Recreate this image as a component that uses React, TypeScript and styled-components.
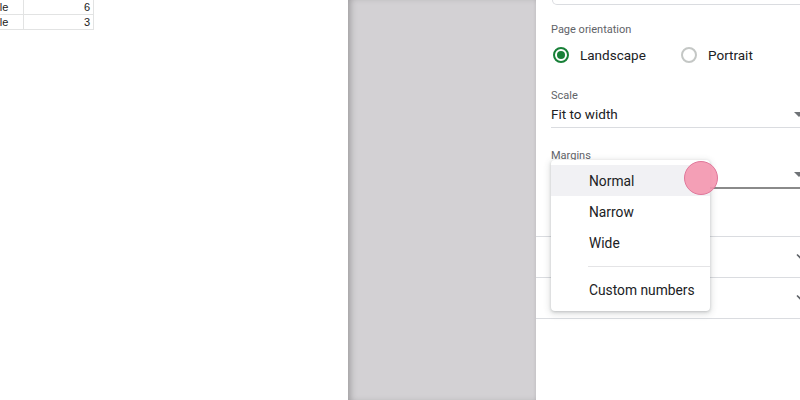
import React from "react";
import styled, { createGlobalStyle } from "styled-components";

const Global = createGlobalStyle`
  html, body { margin: 0; padding: 0; background: #fff; }
  body { font-family: Roboto, "Liberation Sans", Arial, sans-serif; color: #202124; }
  * { box-sizing: border-box; }
`;

const Page = styled.div`
  display: flex;
  width: 800px;
  height: 400px;
  overflow: hidden;
`;

const Sheet = styled.div`
  width: 348px;
  flex: none;
  background: #fff;
  overflow: hidden;
`;

const Table = styled.div`
  display: grid;
  grid-template-columns: 60px 70px;
  margin-left: -36px;
  width: 130px;
  font-family: "Liberation Sans", Arial, sans-serif;
  font-size: 11px;
  color: #222;
`;

const Cell = styled.div<{ $num?: boolean }>`
  height: 15px;
  line-height: 14px;
  padding: 0 3px;
  border-bottom: 1px solid #e2e3e3;
  border-right: 1px solid #e2e3e3;
  white-space: nowrap;
  overflow: hidden;
  text-align: ${(p) => (p.$num ? "right" : "left")};
  ${(p) => (p.$num ? "" : "padding-left: 7px;")}
`;

const Gutter = styled.div`
  width: 188px;
  flex: none;
  background: #d3d1d4;
  box-shadow: inset 5px 0 7px -3px rgba(0, 0, 0, 0.28), inset -3px 0 3px -2px rgba(0, 0, 0, 0.08);
`;

const Panel = styled.div`
  width: 264px;
  flex: none;
  position: relative;
  overflow: hidden;
  background: #fff;
`;

const Inner = styled.div`
  width: 280px;
  display: flex;
  flex-direction: column;
`;

const TopField = styled.div`
  margin-left: 16px;
  height: 5px;
  border: 1px solid #dadce0;
  border-top: none;
  border-bottom-left-radius: 5px;
`;

const Section = styled.div`
  padding-left: 15px;
  display: flex;
  flex-direction: column;
`;

const Label = styled.div<{ $mt: number }>`
  margin-top: ${(p) => p.$mt}px;
  font-size: 11px;
  line-height: 14px;
  color: #5f6368;
`;

const RadioRow = styled.div`
  margin-top: 6px;
  height: 24px;
  display: flex;
  align-items: center;
`;

const RadioOption = styled.div<{ $w: number }>`
  width: ${(p) => p.$w}px;
  display: flex;
  align-items: center;
  gap: 11px;
  font-size: 13.5px;
  color: #202124;
`;

const RadioCircle = styled.span<{ $on?: boolean }>`
  margin-left: 2px;
  width: 16px;
  height: 16px;
  border-radius: 50%;
  border: 2px solid ${(p) => (p.$on ? "#188038" : "#c4c7c5")};
  display: flex;
  align-items: center;
  justify-content: center;
  &::after {
    content: "";
    width: 8px;
    height: 8px;
    border-radius: 50%;
    background: ${(p) => (p.$on ? "#188038" : "transparent")};
  }
`;

const Select = styled.div<{ $mt: number; $active?: boolean }>`
  margin-top: ${(p) => p.$mt}px;
  display: flex;
  align-items: center;
  justify-content: space-between;
  height: ${(p) => (p.$active ? 24 : 23)}px;
  padding-bottom: 4px;
  padding-right: 12px;
  font-size: 13.5px;
  line-height: 18px;
  border-bottom: ${(p) => (p.$active ? "2px solid #8a8a8a" : "1px solid #dadce0")};
`;

const Caret = styled.span`
  width: 0;
  height: 0;
  border-left: 5px solid transparent;
  border-right: 5px solid transparent;
  border-top: 5px solid #6f7377;
`;

const Spacer = styled.div<{ $h: number }>`
  height: ${(p) => p.$h}px;
`;

const Divider = styled.div`
  height: 1px;
  background: #dadce0;
`;

const Collapsed = styled.div`
  height: 40px;
  display: flex;
  align-items: center;
  justify-content: flex-end;
  padding-right: 6px;
`;

const Menu = styled.div`
  position: absolute;
  left: 15px;
  top: 160px;
  width: 159px;
  height: 151px;
  background: #fff;
  border-radius: 4px;
  box-shadow: 0 1px 3px rgba(60, 64, 67, 0.25), 0 2px 6px 2px rgba(60, 64, 67, 0.12);
  padding: 5px 0 6px;
  display: flex;
  flex-direction: column;
`;

const MenuItem = styled.div<{ $hl?: boolean }>`
  height: 31px;
  display: flex;
  align-items: center;
  padding-left: 38px;
  font-size: 13.8px;
  color: #202124;
  background: ${(p) => (p.$hl ? "#f1f1f4" : "transparent")};
`;

const MenuSep = styled.div`
  margin: 8px 0 7px 37px;
  height: 1px;
  background: #e4e4e6;
`;

const Cursor = styled.div`
  position: absolute;
  left: 148px;
  top: 161px;
  width: 34px;
  height: 34px;
  border-radius: 50%;
  background: rgba(244, 150, 175, 0.9);
  border: 1px solid #e0779a;
`;

const Chevron = () => (
  <svg width="16" height="16" viewBox="0 0 16 16" fill="none">
    <path d="M3 5.5 L8 10.5 L13 5.5" stroke="#5f6368" strokeWidth="1.6" />
  </svg>
);

export default function App() {
  return (
    <>
      <Global />
      <Page>
        <Sheet>
          <Table>
            <Cell>Sample</Cell>
            <Cell $num>6</Cell>
            <Cell>Sample</Cell>
            <Cell $num>3</Cell>
          </Table>
        </Sheet>
        <Gutter />
        <Panel>
          <Inner>
            <TopField />
            <Section>
              <Label $mt={18}>Page orientation</Label>
              <RadioRow>
                <RadioOption $w={128}>
                  <RadioCircle $on />
                  Landscape
                </RadioOption>
                <RadioOption $w={120}>
                  <RadioCircle />
                  Portrait
                </RadioOption>
              </RadioRow>
              <Label $mt={22}>Scale</Label>
              <Select $mt={2}>
                Fit to width
                <Caret />
              </Select>
              <Label $mt={21}>Margins</Label>
              <Select $mt={2} $active>
                Normal
                <Caret />
              </Select>
            </Section>
            <Spacer $h={47} />
            <Divider />
            <Collapsed>
              <Chevron />
            </Collapsed>
            <Divider />
            <Collapsed>
              <Chevron />
            </Collapsed>
            <Divider />
          </Inner>
          <Menu>
            <MenuItem $hl>Normal</MenuItem>
            <MenuItem>Narrow</MenuItem>
            <MenuItem>Wide</MenuItem>
            <MenuSep />
            <MenuItem>Custom numbers</MenuItem>
          </Menu>
          <Cursor />
        </Panel>
      </Page>
    </>
  );
}
